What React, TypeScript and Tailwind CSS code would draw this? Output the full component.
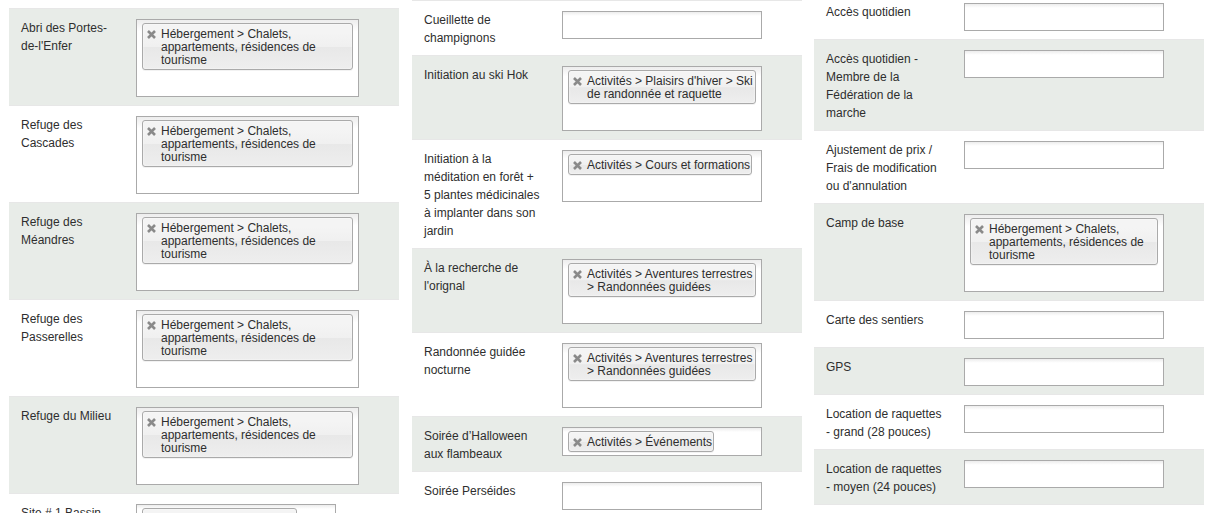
import { useState } from "react";

type Field = { label: string; tag?: string; wide?: boolean };

const lodging = "Hébergement > Chalets, appartements, résidences de tourisme";

const shelters: Field[] = [
  { label: "Abri des Portes-de-l'Enfer", tag: lodging, wide: true },
  { label: "Refuge des Cascades", tag: lodging, wide: true },
  { label: "Refuge des Méandres", tag: lodging, wide: true },
  { label: "Refuge des Passerelles", tag: lodging, wide: true },
  { label: "Refuge du Milieu", tag: lodging, wide: true },
  { label: "Site # 1 Bassin", tag: "Hébergement > Camping" },
];

const activities: Field[] = [
  { label: "Cueillette de champignons" },
  { label: "Initiation au ski Hok", tag: "Activités > Plaisirs d'hiver > Ski de randonnée et raquette" },
  {
    label: "Initiation à la méditation en forêt + 5 plantes médicinales à implanter dans son jardin",
    tag: "Activités > Cours et formations",
  },
  { label: "À la recherche de l'orignal", tag: "Activités > Aventures terrestres > Randonnées guidées" },
  { label: "Randonnée guidée nocturne", tag: "Activités > Aventures terrestres > Randonnées guidées" },
  { label: "Soirée d’Halloween aux flambeaux", tag: "Activités > Événements" },
  { label: "Soirée Perséides" },
];

const services: Field[] = [
  { label: "Accès quotidien" },
  { label: "Accès quotidien - Membre de la Fédération de la marche" },
  { label: "Ajustement de prix / Frais de modification ou d'annulation" },
  { label: "Camp de base", tag: lodging },
  { label: "Carte des sentiers" },
  { label: "GPS" },
  { label: "Location de raquettes - grand (28 pouces)" },
  { label: "Location de raquettes - moyen (24 pouces)" },
];

function TagBox({ id, field }: { id: string; field: Field }) {
  const [tag, setTag] = useState(field.tag);
  return (
    <div
      className={`${
        field.wide ? "w-[223px]" : "w-[200px]"
      } flex min-h-[28px] shrink-0 flex-wrap items-start self-start border border-[#aaa] bg-white bg-[linear-gradient(#eee_1%,#fff_15%)]`}
    >
      {tag && (
        <span className="my-[3px] ml-[5px] flex max-w-[calc(100%-10px)] items-start rounded-[3px] border border-[#aaa] bg-[linear-gradient(#f4f4f4_20%,#f0f0f0_50%,#e8e8e8_52%,#eee_100%)] pt-[4px] pr-px pb-[2px] pl-[4px] leading-[13px] shadow-[inset_0_0_2px_#fff,0_1px_0_rgba(0,0,0,0.05)]">
          <button
            type="button"
            aria-label="Retirer"
            onClick={() => setTag(undefined)}
            className="mr-[5px] flex h-[13px] w-[9px] shrink-0 items-center justify-center text-[#8a8a8a]"
          >
            <svg width="9" height="9" viewBox="0 0 9 9" fill="none" stroke="currentColor" strokeWidth="2.6">
              <path d="M1 1 8 8M8 1 1 8" />
            </svg>
          </button>
          <span>{tag}</span>
        </span>
      )}
      <input id={id} type="text" className="h-[23px] w-0 min-w-[25px] flex-1 bg-transparent px-[5px] outline-none" />
    </div>
  );
}

type ColumnProps = { name: string; fields: Field[]; striped: 0 | 1; narrow?: boolean; className: string };

function Column({ name, fields, striped, narrow, className }: ColumnProps) {
  return (
    <section className={`min-w-0 flex-1 ${className}`}>
      {fields.map((field, i) => (
        <div
          key={field.label}
          className={`flex border-t border-[#e7e7e7] pt-[10px] pb-2 pl-3 ${i % 2 === striped ? "bg-[#e8ece8]" : ""}`}
        >
          <label
            htmlFor={`${name}-${i}`}
            className={`${narrow ? "mr-[12px] w-[103px]" : "mr-[20px] w-[118px]"} shrink-0 leading-[18px]`}
          >
            {field.label}
          </label>
          <TagBox id={`${name}-${i}`} field={field} />
        </div>
      ))}
      <div className="border-t border-[#e7e7e7]" />
    </section>
  );
}

export default function App() {
  return (
    <main className="flex h-screen items-start gap-3 overflow-hidden bg-white pr-[15px] pl-[9px] font-['Liberation_Sans',Arial,sans-serif] text-[12px] text-[#2e2e2e]">
      <Column name="refuges" fields={shelters} striped={0} narrow className="mr-px pt-2" />
      <Column name="activites" fields={activities} striped={1} className="" />
      <Column name="services" fields={services} striped={1} className="-mt-2" />
    </main>
  );
}
